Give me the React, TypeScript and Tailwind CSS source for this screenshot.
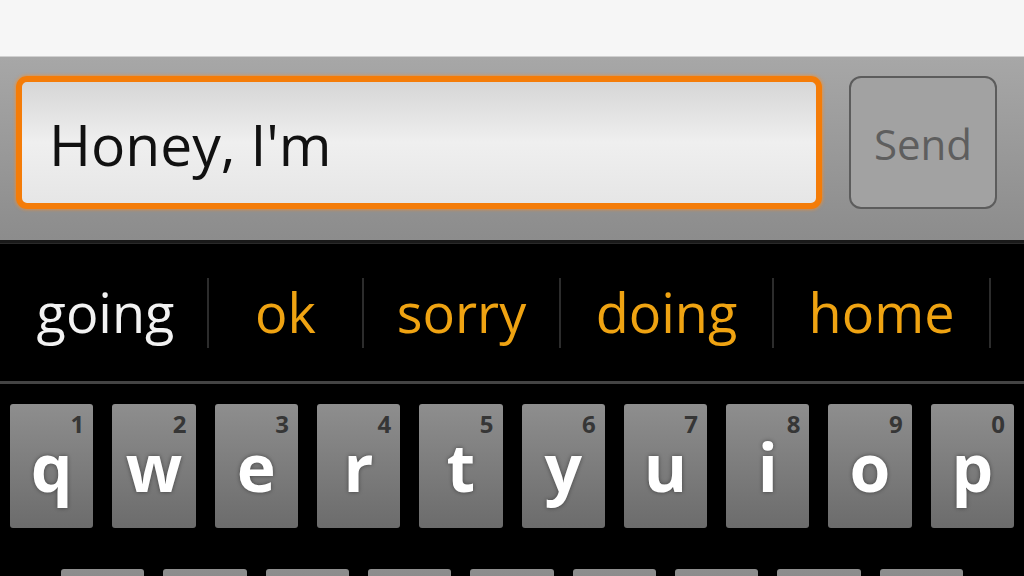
import React from "react";

const row1 = [
  ["q", "1"], ["w", "2"], ["e", "3"], ["r", "4"], ["t", "5"],
  ["y", "6"], ["u", "7"], ["i", "8"], ["o", "9"], ["p", "0"],
];
const row2 = ["a", "s", "d", "f", "g", "h", "j", "k", "l"];

const suggestions: { w: string; text: string; cls: string }[] = [
  { w: "w-[207px]", text: "going", cls: "text-[#f2f2f2]" },
  { w: "w-[153px]", text: "ok", cls: "text-[#efa312]" },
  { w: "w-[195px]", text: "sorry", cls: "text-[#efa312]" },
  { w: "w-[211px]", text: "doing", cls: "text-[#efa312]" },
  { w: "w-[215px]", text: "home", cls: "text-[#efa312]" },
];

function Key({ letter, num }: { letter: string; num?: string }) {
  return (
    <div className="relative h-[124px] rounded-[3px] bg-gradient-to-b from-[#8e8e8e] to-[#6c6c6c] flex justify-center items-start">
      {num && (
        <span className="absolute top-[8px] right-[9px] text-[24px] leading-none font-bold text-[#363636]">
          {num}
        </span>
      )}
      <span className="mt-[36px] text-[66px] leading-[0.8] font-bold text-white [text-shadow:0_0_4px_rgba(0,0,0,0.45)]">
        {letter}
      </span>
    </div>
  );
}

export default function App() {
  return (
    <div
      className="w-[1024px] h-[576px] overflow-hidden bg-black flex flex-col"
      style={{ fontFamily: '"Open Sans", "DejaVu Sans", sans-serif' }}
    >
      {/* top white area */}
      <div className="h-[57px] shrink-0 bg-[#f6f6f6] border-b border-[#d0d0d0]" />

      {/* compose bar */}
      <div className="h-[186px] shrink-0 bg-gradient-to-b from-[#a7a7a7] to-[#8c8c8c] flex items-start pt-[19px] pl-[16px] pr-[27px] gap-[27px] border-b-[3px] border-[#1a1a1a]">
        <div className="w-[806px] h-[133px] rounded-[11px] border-[6px] border-[#f47c08] shadow-[0_0_3px_1px_rgba(255,140,30,0.6)] bg-gradient-to-b from-[#d6d6d6] via-[#efefef] to-[#e6e6e6] flex items-center pl-[27px]">
          <span className="text-[57px] leading-none text-[#111] pt-[4px]">Honey, I'm</span>
        </div>
        <div className="w-[148px] h-[133px] rounded-[12px] border-2 border-[#5c5c5c] bg-[#a2a2a2] flex items-center justify-center">
          <span className="text-[42px] leading-none text-[#5e5e5e] pt-[2px]">Send</span>
        </div>
      </div>

      {/* suggestion strip */}
      <div className="h-[141px] shrink-0 bg-black flex items-center border-t border-[#2a2a2a] border-b-[3px] border-b-[#444]">
        {suggestions.map((s, i) => (
          <React.Fragment key={s.text}>
            <div className={`${s.w} flex justify-center items-center h-full ${i === 0 ? "pl-[4px]" : ""}`}>
              <span className={`text-[54px] leading-none ${s.cls} pb-[2px]`}>{s.text}</span>
            </div>
            <div className="w-[2px] h-[70px] bg-[#2c2c2c]" />
          </React.Fragment>
        ))}
      </div>

      {/* keyboard */}
      <div className="flex-1 bg-black flex flex-col pt-[20px] gap-[41px]">
        <div className="grid grid-cols-10 gap-[19px] px-[10px]">
          {row1.map(([l, n]) => (
            <Key key={l} letter={l} num={n} />
          ))}
        </div>
        <div className="grid grid-cols-9 gap-[19px] px-[61px]">
          {row2.map((l) => (
            <Key key={l} letter={l} />
          ))}
        </div>
      </div>
    </div>
  );
}
